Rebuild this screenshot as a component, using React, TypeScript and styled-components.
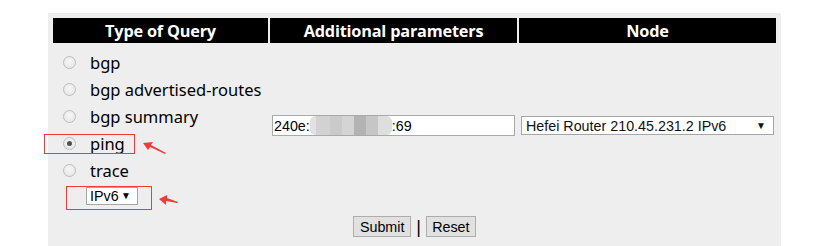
import React from "react";
import styled, { createGlobalStyle } from "styled-components";

const Global = createGlobalStyle`
  html, body { margin: 0; padding: 0; background: #ffffff; }
  body { font-family: "Liberation Sans", Arial, sans-serif; }
`;

const Page = styled.div`
  position: relative;
  width: 815px;
  height: 246px;
  overflow: hidden;
  padding: 13px 0 0 48px;
  box-sizing: border-box;
`;

const Panel = styled.form`
  width: 733px;
  height: 240px;
  box-sizing: border-box;
  background: #eeeeee;
  padding: 5px;
  margin: 0;
`;

const Grid = styled.div`
  display: grid;
  grid-template-columns: 215px 247px 257px;
  column-gap: 2px;
  row-gap: 2px;
`;

const HeadCell = styled.div`
  background: #000000;
  color: #ffffff;
  height: 25px;
  display: flex;
  align-items: center;
  justify-content: center;
  font-family: "Open Sans", "Noto Sans", sans-serif;
  font-weight: 700;
  font-size: 16.3px;
  letter-spacing: -0.2px;
`;

const QueryCell = styled.div`
  padding: 4px 0 0 10px;
  height: 165px;
  box-sizing: border-box;
`;

const RadioRow = styled.label`
  display: flex;
  align-items: center;
  height: 27px;
  font-family: "Noto Sans", "Open Sans", sans-serif;
  font-size: 16.5px;
  color: #000;
`;

const Radio = styled.span<{ $checked?: boolean }>`
  width: 13px;
  height: 13px;
  box-sizing: border-box;
  border-radius: 50%;
  border: 1px solid #bcbcbc;
  background: radial-gradient(circle at 50% 40%, #f6f6f6 0%, #e4e4e4 100%);
  margin: 0 14px 0 0;
  display: flex;
  align-items: center;
  justify-content: center;
  flex: none;
  &::after {
    content: "";
    display: ${(p) => (p.$checked ? "block" : "none")};
    width: 5px;
    height: 5px;
    border-radius: 50%;
    background: #505050;
  }
`;

const VersionRow = styled.div`
  padding: 3px 0 0 23px;
`;

const SmallSelect = styled.div<{ $w: number }>`
  width: ${(p) => p.$w}px;
  box-sizing: border-box;
  height: 18px;
  border: 1px solid #a6a6a6;
  background: #ffffff;
  display: flex;
  align-items: center;
  justify-content: space-between;
  padding: 0 6px 0 3px;
  font-family: "Liberation Sans", Arial, sans-serif;
  font-size: 14.3px;
  color: #000;
`;

const Arrow = styled.span`
  font-size: 10px;
  line-height: 1;
`;

const MidCell = styled.div`
  display: flex;
  align-items: center;
  padding: 0 0 4px 2px;
`;

const TextBox = styled.div`
  width: 243px;
  height: 21px;
  box-sizing: border-box;
  border: 1px solid #a9a9a9;
  background: #fff;
  display: flex;
  align-items: center;
  padding-left: 1px;
  font-family: "Liberation Sans", Arial, sans-serif;
  font-size: 14.3px;
  color: #000;
  white-space: pre;
`;

const Mosaic = styled.span`
  display: flex;
  height: 19px;
  width: 82px;
  border-radius: 6px;
  overflow: hidden;
  background: #e6e6e6;
`;

const Tile = styled.span<{ $c: string; $w: number }>`
  width: ${(p) => p.$w}px;
  height: 100%;
  background: ${(p) => p.$c};
`;

const NodeSelect = styled(SmallSelect)`
  height: 19px;
  padding: 0 7px 0 4px;
  color: #111;
`;

const ButtonRow = styled.div`
  grid-column: 1 / 4;
  display: flex;
  justify-content: center;
  align-items: center;
  gap: 5px;
  padding-top: 4px;
  font-family: "Liberation Sans", Arial, sans-serif;
  font-size: 16px;
`;

const Button = styled.button<{ $w: number }>`
  width: ${(p) => p.$w}px;
  height: 21px;
  box-sizing: border-box;
  border: 1px solid #adadad;
  background: #e1e1e1;
  font-family: "Liberation Sans", Arial, sans-serif;
  font-size: 14.3px;
  color: #000;
  padding: 0;
  margin: 0;
`;

const Sep = styled.span`
  color: #000;
  font-size: 18px;
  line-height: 1;
`;

const Mark = styled.div<{ $x: number; $y: number; $w: number; $h: number }>`
  position: absolute;
  left: ${(p) => p.$x}px;
  top: ${(p) => p.$y}px;
  width: ${(p) => p.$w}px;
  height: ${(p) => p.$h}px;
  box-sizing: border-box;
  border: 1px solid #f03c3c;
  pointer-events: none;
`;

const ArrowSvg = styled.svg<{ $x: number; $y: number }>`
  position: absolute;
  left: ${(p) => p.$x}px;
  top: ${(p) => p.$y}px;
  pointer-events: none;
`;

const queries = [
  { label: "bgp" },
  { label: "bgp advertised-routes" },
  { label: "bgp summary" },
  { label: "ping", checked: true },
  { label: "trace" },
];

const tiles: [string, number][] = [
  ["#e2e2e2", 6],
  ["#d2d2d2", 14],
  ["#cacaca", 12],
  ["#d4d4d4", 12],
  ["#b3b3b3", 12],
  ["#c6c6c6", 12],
  ["#dedede", 14],
];

export default function App() {
  return (
    <>
      <Global />
      <Page>
        <Panel onSubmit={(e) => e.preventDefault()}>
          <Grid>
            <HeadCell>Type of Query</HeadCell>
            <HeadCell>Additional parameters</HeadCell>
            <HeadCell>Node</HeadCell>

            <QueryCell>
              {queries.map((q) => (
                <RadioRow key={q.label}>
                  <Radio $checked={q.checked} />
                  {q.label}
                </RadioRow>
              ))}
              <VersionRow>
                <SmallSelect $w={52}>
                  IPv6
                  <Arrow>▼</Arrow>
                </SmallSelect>
              </VersionRow>
            </QueryCell>

            <MidCell>
              <TextBox>
                {"240e:"}
                <Mosaic>
                  {tiles.map(([c, w], i) => (
                    <Tile key={i} $c={c} $w={w} />
                  ))}
                </Mosaic>
                {":69"}
              </TextBox>
            </MidCell>

            <MidCell>
              <NodeSelect $w={253}>
                Hefei Router 210.45.231.2 IPv6
                <Arrow>▼</Arrow>
              </NodeSelect>
            </MidCell>

            <ButtonRow>
              <Button $w={58} type="submit">Submit</Button>
              <Sep>|</Sep>
              <Button $w={50} type="reset">Reset</Button>
            </ButtonRow>
          </Grid>
        </Panel>

        <Mark $x={44} $y={134} $w={91} $h={20} />
        <Mark $x={66} $y={186} $w={86} $h={24} />

        <ArrowSvg $x={142} $y={140} width="26" height="16" viewBox="0 0 26 16">
          <path d="M1 3 L11 2 L9 5 L24 13 L23 14 L8 7 L6 10 Z" fill="#f03c3c" />
        </ArrowSvg>
        <ArrowSvg $x={158} $y={194} width="22" height="14" viewBox="0 0 22 14">
          <path d="M1 5 L9 1 L9 4 L20 8 L19 9 L8 7 L8 11 Z" fill="#f03c3c" />
        </ArrowSvg>
      </Page>
    </>
  );
}
